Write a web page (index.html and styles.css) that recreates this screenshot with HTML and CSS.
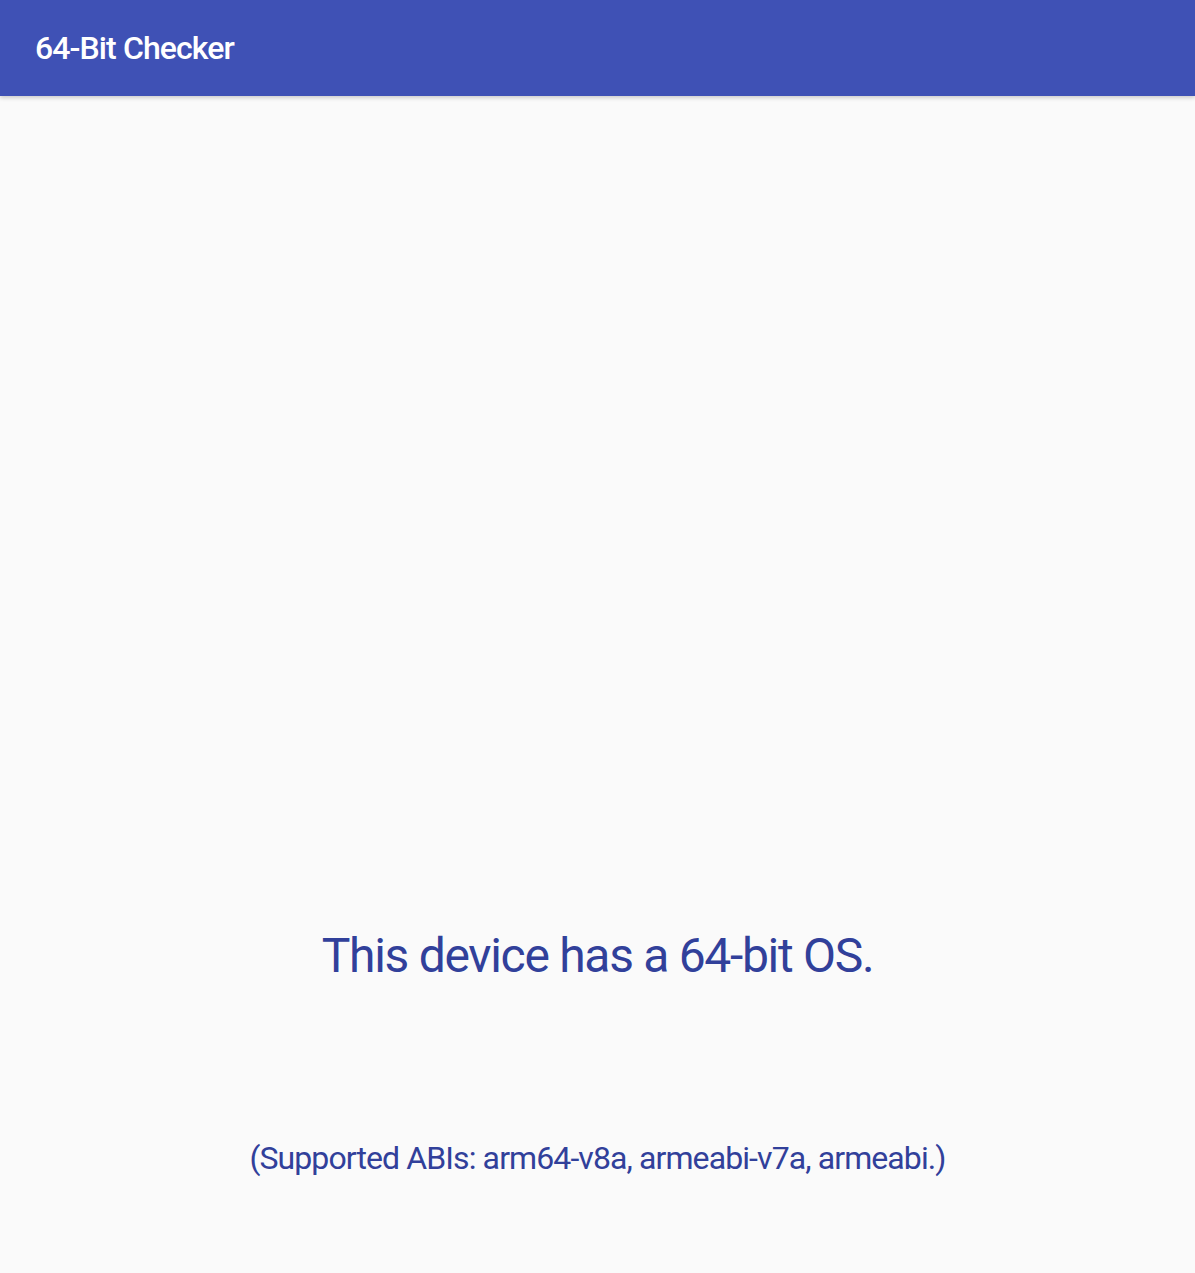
FILE: index.html
```html
<!doctype html>
<html>
<head>
<meta charset="utf-8">
<title>64-Bit Checker</title>
<link rel="stylesheet" href="styles.css">
</head>
<body>
<div class="toolbar">
	<h1 class="toolbar-title">64-Bit Checker</h1>
</div>
<div class="content">
	<p class="result">This device has a 64-bit OS.</p>
	<p class="abis">(Supported ABIs: arm64-v8a, armeabi-v7a, armeabi.)</p>
</div>
</body>
</html>
```

FILE: styles.css
```css
*{ margin:0; padding:0; box-sizing:border-box;}
html,body{ height:100%;}
body{ background:#fafafa; font-family:Roboto, "Liberation Sans", sans-serif; display:flex; flex-direction:column;}

.toolbar{ height:96px; background:#3f51b5; display:flex; align-items:center; padding:0 35px; box-shadow:0 2px 4px rgba(0,0,0,0.18); position:relative; z-index:1;}
.toolbar-title{ color:#fff; font-size:32px; font-weight:500; letter-spacing:-0.9px;}

.content{ flex:1; display:flex; flex-direction:column; align-items:center; padding-top:822px;}
.result{ color:#31409a; font-size:48px; line-height:76px; letter-spacing:-1.3px;}
.abis{ color:#31409a; font-size:32px; line-height:40px; letter-spacing:-0.9px; margin-top:144px;}
```
